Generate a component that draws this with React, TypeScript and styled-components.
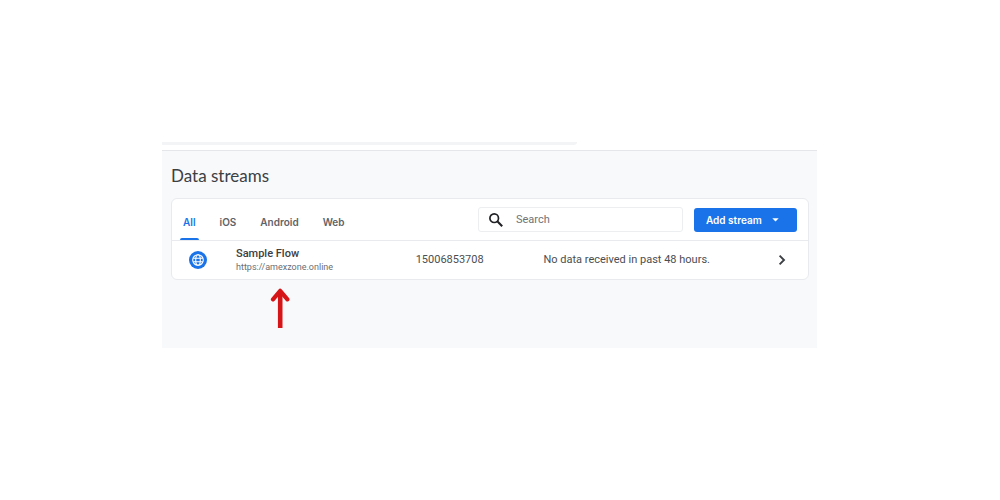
import React, { useState } from "react";
import styled, { createGlobalStyle } from "styled-components";

const GlobalStyle = createGlobalStyle`
  *, *::before, *::after { box-sizing: border-box; }
  body {
    margin: 0;
    background: #ffffff;
    color: #3c4043;
    font-family: Roboto, "Liberation Sans", sans-serif;
    font-size: 11px;
  }
`;

const Page = styled.div`
  padding: 142px 183px 152px 162px;
`;

const TopStrip = styled.div`
  width: 63.4%;
  height: 3px;
  background: #f3f4f6;
  border-bottom-right-radius: 3px;
`;

const Panel = styled.main`
  margin-top: 5px;
  padding: 13px 8px 20px 9px;
  border-top: 1px solid #e4e6e9;
  background: #f8f9fb;
`;

const Title = styled.h1`
  margin: 0 0 10px;
  font-family: Lato, sans-serif;
  font-size: 17px;
  font-weight: 400;
  line-height: 24px;
`;

const Card = styled.section`
  border: 1px solid #e8eaed;
  border-radius: 6px;
  background: #ffffff;
`;

const Toolbar = styled.div`
  display: flex;
  align-items: center;
  height: 42px;
  padding: 0 11px 0 8px;
  border-bottom: 1px solid #e8eaed;
`;

const Tabs = styled.div`
  display: flex;
  align-self: stretch;
  gap: 18px;
`;

const Tab = styled.button<{ $active: boolean }>`
  position: relative;
  padding: 5px 3px 0;
  border: 0;
  background: none;
  color: ${(p) => (p.$active ? "#1a73e8" : "#5f6368")};
  font-family: Inter, sans-serif;
  font-size: 10px;
  font-weight: 600;
  line-height: 14px;
  cursor: pointer;

  &::after {
    content: "";
    position: absolute;
    right: 0;
    bottom: 0;
    left: 0;
    height: 2px;
    border-radius: 2px 2px 0 0;
    background: ${(p) => (p.$active ? "#1a73e8" : "transparent")};
  }
`;

const SearchBox = styled.label`
  display: flex;
  align-items: center;
  gap: 13px;
  width: 205px;
  height: 25px;
  margin-left: auto;
  padding: 0 10px;
  border: 1px solid #eceef0;
  border-radius: 3px;
  color: #202124;
`;

const SearchInput = styled.input`
  flex: 1;
  min-width: 0;
  padding: 0;
  border: 0;
  outline: 0;
  background: none;
  color: #3c4043;
  font: inherit;

  &::placeholder {
    color: #6f7378;
    opacity: 1;
  }
`;

const AddButton = styled.button`
  display: flex;
  align-items: center;
  justify-content: space-between;
  width: 103px;
  height: 24px;
  margin-left: 11px;
  padding: 0 18px 0 12px;
  border: 0;
  border-radius: 3px;
  background: #1a73e8;
  color: #ffffff;
  font-family: Inter, sans-serif;
  font-size: 10px;
  font-weight: 600;
  white-space: nowrap;
  cursor: pointer;
`;

const StreamList = styled.ul`
  margin: 0;
  padding: 0;
  list-style: none;
`;

const StreamRow = styled.a`
  display: grid;
  grid-template-columns: 47px 180fr 128fr 233fr 12px;
  align-items: center;
  height: 38px;
  padding: 0 20px 0 17px;
  color: #4a4e52;
  line-height: 14px;
  text-decoration: none;
`;

const StreamName = styled.strong`
  display: block;
  color: #3c4043;
  font-weight: 500;
  line-height: 14px;
`;

const StreamUrl = styled.span`
  display: block;
  color: #6a6e73;
  font-size: 9px;
  line-height: 12px;
`;

const Pointer = styled.svg`
  display: block;
  margin: 8px 0 0 99px;
`;

function SearchIcon() {
  return (
    <svg width="14" height="14" viewBox="0 0 14 14" fill="none" stroke="currentColor" aria-hidden="true">
      <circle cx="5.2" cy="5.2" r="4.3" strokeWidth="1.7" />
      <path d="M8.3 8.3 13.2 13.2" strokeWidth="2.1" />
    </svg>
  );
}

function GlobeIcon() {
  return (
    <svg width="18" height="18" viewBox="0 0 18 18" fill="none" aria-hidden="true">
      <circle cx="9" cy="9" r="9" fill="#1a73e8" />
      <g stroke="#ffffff" strokeWidth="1.1">
        <circle cx="9" cy="9" r="5.3" />
        <ellipse cx="9" cy="9" rx="2.3" ry="5.3" />
        <path d="M4.2 7.2h9.6M4.2 10.8h9.6" />
      </g>
    </svg>
  );
}

const tabs = ["All", "iOS", "Android", "Web"];

const streams = [
  {
    name: "Sample Flow",
    url: "https://amexzone.online",
    id: "15006853708",
    status: "No data received in past 48 hours.",
  },
];

export default function App() {
  const [active, setActive] = useState("All");
  return (
    <>
      <GlobalStyle />
      <Page>
        <TopStrip />
        <Panel>
          <Title>Data streams</Title>
          <Card>
            <Toolbar>
              <Tabs role="tablist">
                {tabs.map((t) => (
                  <Tab key={t} role="tab" aria-selected={t === active} $active={t === active} onClick={() => setActive(t)}>
                    {t}
                  </Tab>
                ))}
              </Tabs>
              <SearchBox>
                <SearchIcon />
                <SearchInput type="text" placeholder="Search" aria-label="Search" />
              </SearchBox>
              <AddButton type="button">
                Add stream
                <svg width="7" height="4" viewBox="0 0 7 4" aria-hidden="true">
                  <path d="M0.3 0.3h6.4L3.5 3.6z" fill="currentColor" />
                </svg>
              </AddButton>
            </Toolbar>
            <StreamList>
              {streams.map((s) => (
                <li key={s.id}>
                  <StreamRow href="#stream">
                    <GlobeIcon />
                    <span>
                      <StreamName>{s.name}</StreamName>
                      <StreamUrl>{s.url}</StreamUrl>
                    </span>
                    <span>{s.id}</span>
                    <span>{s.status}</span>
                    <svg width="12" height="12" viewBox="0 0 12 12" fill="none" aria-hidden="true">
                      <path d="M3.6 1.6 8 6l-4.4 4.4" stroke="#3c4043" strokeWidth="1.9" />
                    </svg>
                  </StreamRow>
                </li>
              ))}
            </StreamList>
          </Card>
          <Pointer width="20" height="40" viewBox="0 0 20 40" fill="none" aria-hidden="true">
            <path d="M10.2 40V4" stroke="#d61518" strokeWidth="4.6" />
            <path d="M3 11.4 10.2 2.8l7.2 8.6" stroke="#d61518" strokeWidth="4.2" strokeLinecap="round" strokeLinejoin="round" />
          </Pointer>
        </Panel>
      </Page>
    </>
  );
}
